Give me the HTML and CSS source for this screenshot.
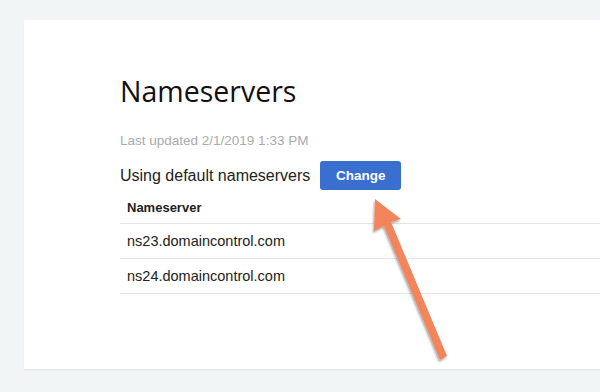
FILE: index.html
```html
<!DOCTYPE html>
<html>
<head>
<meta charset="utf-8">
<link rel="stylesheet" href="styles.css">
</head>
<body>
<div class="card">
  <h1 class="title">Nameservers</h1>
  <div class="updated">Last updated 2/1/2019 1:33 PM</div>
  <div class="status">
    <span class="status-text">Using default nameservers</span>
    <button class="btn">Change</button>
  </div>
  <div class="table">
    <div class="th">Nameserver</div>
    <div class="td">ns23.domaincontrol.com</div>
    <div class="td">ns24.domaincontrol.com</div>
  </div>
</div>
<svg class="arrow" width="600" height="392" viewBox="0 0 600 392">
  <defs>
    <filter id="sh" x="-20%" y="-20%" width="140%" height="140%">
      <feDropShadow dx="-1" dy="2" stdDeviation="1.2" flood-color="#000" flood-opacity="0.35"/>
    </filter>
  </defs>
  <g filter="url(#sh)" fill="#f2855c">
    <polygon points="375,199 401,219 391,222 447,356 440,360 384,226 374,231"/>
  </g>
</svg>
</body>
</html>
```
FILE: styles.css
```css
html, body {
  margin: 0;
  padding: 0;
}
body {
  background: #f2f5f6;
  width: 600px;
  height: 392px;
  overflow: hidden;
  position: relative;
  font-family: "Liberation Sans", Arial, sans-serif;
  color: #1b1b1b;
}
.card {
  margin: 20px 0 0 24px;
  height: 350px;
  background: #fff;
  border-bottom: 1px solid #e6e8ea;
  box-shadow: 0 1px 2px rgba(0,0,0,0.04);
  padding: 53px 0 0 96px;
  box-sizing: border-box;
}
.title {
  margin: 0;
  font-family: "Open Sans", sans-serif;
  font-weight: 400;
  font-size: 28.5px;
  line-height: 36px;
  color: #111;
}
.updated {
  margin-top: 24px;
  font-size: 13.5px;
  line-height: 16px;
  color: #a9aaac;
}
.status {
  display: flex;
  align-items: center;
  gap: 10px;
  margin-top: 12px;
}
.status-text {
  font-size: 16px;
  color: #222;
}
.btn {
  width: 81px;
  height: 29px;
  border: none;
  border-radius: 3px;
  background: #3a6fd0;
  color: #fff;
  font-family: "Liberation Sans", Arial, sans-serif;
  font-weight: 700;
  font-size: 13.5px;
  padding: 0;
}
.table {
  margin-top: 0;
}
.th, .td {
  padding-left: 7px;
  border-bottom: 1px solid #e4e4e4;
  color: #222;
}
.th {
  height: 33px;
  line-height: 36px;
  font-weight: 700;
  font-size: 13px;
}
.td {
  height: 34px;
  line-height: 34px;
  font-size: 14.5px;
}
.arrow {
  position: absolute;
  left: 0;
  top: 0;
}
```
